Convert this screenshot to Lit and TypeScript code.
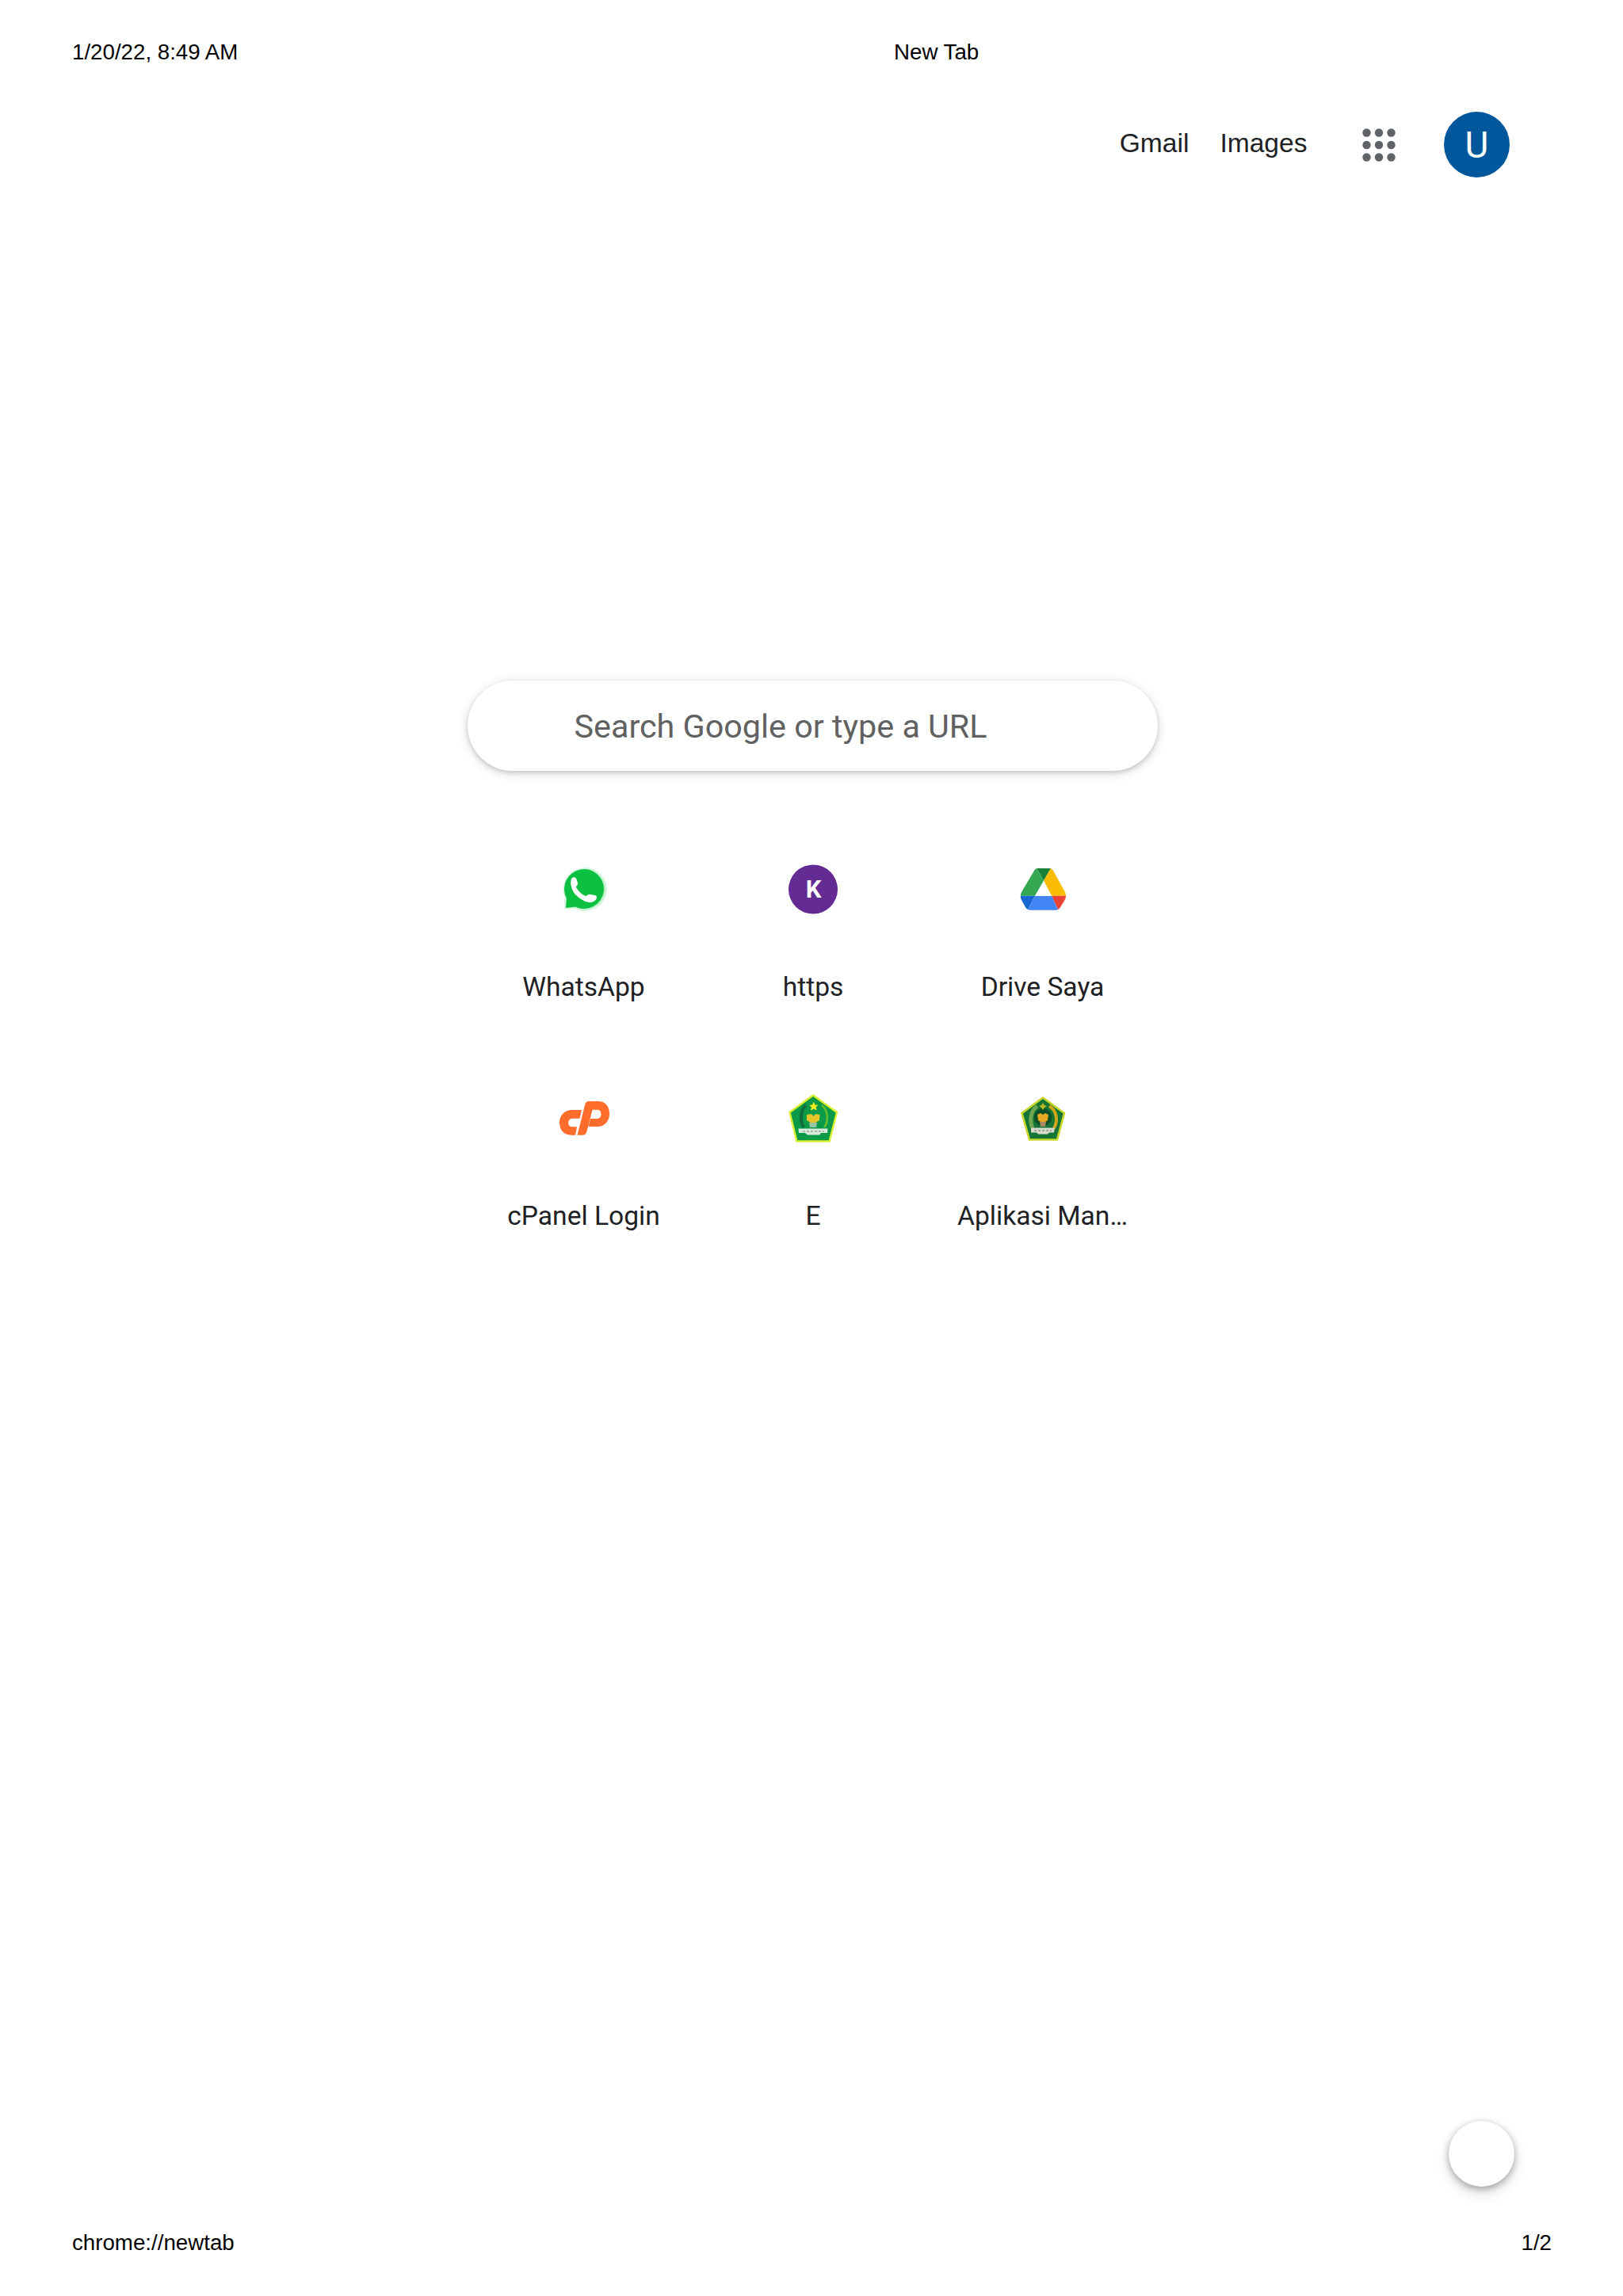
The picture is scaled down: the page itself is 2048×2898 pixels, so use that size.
import { LitElement, html, css, svg } from 'lit';
import { customElement, property } from 'lit/decorators.js';

const whatsapp = svg`
  <path d="M6.500 54.500 L7.500 40 A26.500 26.500 0 1 1 21 54.500 Z" fill="#b5f0c3" stroke="#d5f7dd" stroke-width="2" stroke-linejoin="round"/>
  <path d="M8 54 L9 42 A25 25 0 1 1 20 52.500 Z" fill="#0cc042"/>
  <path d="M15 17 C18 14 21 15 22 19 L23 23 C23 26 21 26 21 28 C24 33 28 37 33 39 C35 39 36 36 39 37 L45 38 C48 39 48 43 43 46 C36 49 27 44 20 37 C15 31 13 23 15 17 Z" fill="#fff"/>
`;

const drive = svg`
  <path d="M23 4 L41 4 L32 19.500 Z" fill="#188038"/>
  <path d="M23 4 L32 19.500 L21 38.700 L2.700 38.700 Q3 36 4 34 L20 7 Q21 5 23 4 Z" fill="#34a853"/>
  <path d="M41 4 Q43 5 44 7 L59 34 Q60 36 60 38.700 L42 38.700 L32 19.500 Z" fill="#fbbc04"/>
  <path d="M2.700 38.700 L21 38.700 L12 56 Q10 55 9 53 L4 44 Q3 42 2.700 38.700 Z" fill="#1967d2"/>
  <path d="M42 38.700 L60 38.700 Q60 42 58 45 L53 53 Q52 55 50 56 Z" fill="#ea4335"/>
  <path d="M21 38.700 L42 38.700 L50 56 Q49 56.700 47 56.700 L15 56.700 Q13 56.700 12 56 Z" fill="#4285f4"/>
  <path d="M32 21 L42 38.700 L21 38.700 Z" fill="#fff"/>
`;

const cpanel = svg`
  <path d="M28 20 L25.500 30.700 L16 30.700 C9.500 31 9.500 41.300 16 41.300 L22 41.300 L20 51.700 L15 51.700 C5 51.700 0 44.500 0 36 C0 27 6 20 16 20 Z" fill="#ff6c2c"/>
  <path fill-rule="evenodd" d="M37 9 L49 9 C58 9 63 16 63 24.500 C63 34 57 41 48 41 L36.500 41 L39 31 L48 31 C54 31 54 19.700 48 19.700 L41.500 19.700 L34.500 47 Q33.500 51.700 29 51.700 L22.500 51.700 L32 14 Q33 9 37 9 Z" fill="#ff6c2c"/>
`;

const emblem = svg`
  <path d="M31 1.500 L61 23 L51.500 59.500 L10.500 59.500 L1.500 23 Z" fill="#0b9b48" stroke="#d9ef2e" stroke-width="2.400"/>
  <path d="M22 14 C15 20 14 34 19 42" fill="none" stroke="#126b3b" stroke-width="4"/>
  <path d="M42 14 C50 20 51 34 45 42" fill="none" stroke="#67bd2c" stroke-width="2.500"/>
  <path d="M31.700 10.500 L33 14 L36.500 14.200 L34 16.500 L35 20 L31.700 18 L28.500 20 L29.500 16.500 L27 14.200 L30.500 14 Z" fill="#f3ec21" stroke="#f3ec21"/>
  <path d="M23 26 L29 25 L31.500 28 L34 25 L39.500 26 L39 33 L34 36 L28 36 L23 33 Z" fill="#e5c52c"/>
  <path d="M26 36 L36 36 L35 42 L27 42 Z" fill="#9bc4a2"/>
  <path d="M12.500 43.500 L49.500 43.500 L49 49 L41 49 L39 51.500 L24 51.500 L21 49 L13 49 Z" fill="#dceadd"/>
  <path d="M18 47 H45" stroke="#86ae90" stroke-width="1.500" stroke-dasharray="3 2"/>
`;

const emblemDark = svg`
  <path d="M31 4.500 L58 24 L49 57.500 L14 57.500 L4.500 24 Z" fill="#147535" stroke="#c9d72b" stroke-width="2.600"/>
  <path d="M24 15 C15 21 14 34 18 43" fill="none" stroke="#70a650" stroke-width="5"/>
  <path d="M39 15 C49 21 50 34 45 43" fill="none" stroke="#d2a51c" stroke-width="4"/>
  <circle cx="31" cy="29" r="11" fill="#0c4f26"/>
  <path d="M31 11 L33 14 L36 15 L33 17 L31 20 L29 17 L26 15 L29 14 Z" fill="#b4b522"/>
  <path d="M24 26 L28 24 L31 26 L34 24 L38 26 L37 33 L34 35 L28 35 L25 33 Z" fill="#e9a822"/>
  <path d="M27 35 L35 35 L34 41 L28 41 Z" fill="#a98a62"/>
  <path d="M16 42.500 L46 42.500 L45 48.500 L39 48.500 L37 50.500 L25 50.500 L23 48.500 L16 48.500 Z" fill="#d6d9cc"/>
  <path d="M20 46 H42" stroke="#8d9d8b" stroke-width="1.500" stroke-dasharray="3 2"/>
`;

const letterK = svg`
  <circle cx="31" cy="30.500" r="31" fill="#642b94"/>
  <text x="31.500" y="41" class="letter" text-anchor="middle">K</text>
`;

@customElement('shortcut-tile')
export class ShortcutTile extends LitElement {
  @property() label = '';
  @property({ attribute: false }) icon: unknown;

  static styles = css`
    :host {
      display: flex;
      flex-direction: column;
      align-items: center;
      box-sizing: border-box;
      height: 289px;
      padding-top: 41px;
    }
    svg {
      width: 62px;
      height: 62px;
      overflow: visible;
    }
    .letter {
      font: 700 31px Roboto, sans-serif;
      fill: #fff;
    }
    .label {
      margin-top: 72px;
      font: 33.600px/40px Roboto, sans-serif;
      color: #202124;
      white-space: nowrap;
    }
  `;

  render() {
    return html`
      <svg viewBox="0 0 62 62">${this.icon}</svg>
      <span class="label">${this.label}</span>
    `;
  }
}

@customElement('app-root')
export class AppRoot extends LitElement {
  static styles = css`
    :host {
      display: flex;
      flex-direction: column;
      box-sizing: border-box;
      width: 2048px;
      height: 2898px;
      background: #fff;
      color: #000;
      font-family: "Liberation Sans", Arial, sans-serif;
    }
    .print-header,
    .print-footer {
      display: flex;
      padding: 0 90px 0 91px;
      font-size: 27.700px;
      line-height: 32px;
    }
    .print-header {
      padding-top: 50px;
    }
    .print-header span {
      width: 1037px;
    }
    .print-header .title {
      width: auto;
    }
    .print-footer {
      justify-content: space-between;
      padding-bottom: 51px;
    }
    .toolbar {
      display: flex;
      align-items: center;
      justify-content: flex-end;
      height: 83px;
      margin-top: 59px;
      padding-right: 143px;
    }
    .toolbar a {
      margin-right: 39px;
      padding-bottom: 3px;
      font-size: 33.600px;
      line-height: 40px;
      color: #202124;
    }
    .apps {
      width: 62px;
      height: 62px;
      margin: 0 51.500px 0 20px;
      fill: #5f6368;
    }
    .avatar {
      display: flex;
      align-items: center;
      justify-content: center;
      width: 83px;
      height: 83px;
      border-radius: 50%;
      background: #01579b;
      color: #fff;
      font: 400 46px Roboto, sans-serif;
    }
    main {
      display: flex;
      flex-direction: column;
      align-items: center;
      margin-top: 635px;
    }
    .search {
      display: flex;
      align-items: center;
      box-sizing: border-box;
      width: 871px;
      height: 114px;
      margin-left: 3px;
      padding: 2px 0 0 134.500px;
      border-radius: 57px;
      background: #fff;
      box-shadow: 0 2.600px 13px rgba(32, 33, 36, 0.18), 0 2.600px 5px rgba(32, 33, 36, 0.14);
      color: #616161;
      font: 41.300px Roboto, sans-serif;
    }
    .shortcuts {
      display: grid;
      grid-template-columns: repeat(3, 289.500px);
      margin: 78px 0 0 4px;
    }
    .fab-row {
      display: flex;
      flex: 1;
      align-items: flex-end;
      justify-content: flex-end;
      padding: 0 137.500px 55px 0;
    }
    .fab {
      width: 83px;
      height: 83px;
      border-radius: 50%;
      background: #fff;
      box-shadow: 0 2.600px 8px rgba(0, 0, 0, 0.3), 0 8px 18px rgba(0, 0, 0, 0.14);
    }
  `;

  private shortcuts = [
    { label: 'WhatsApp', icon: whatsapp },
    { label: 'https', icon: letterK },
    { label: 'Drive Saya', icon: drive },
    { label: 'cPanel Login', icon: cpanel },
    { label: 'E', icon: emblem },
    { label: 'Aplikasi Man…', icon: emblemDark },
  ];

  private dots = [15.5, 31, 46.5];

  render() {
    return html`
      <header class="print-header">
        <span>1/20/22, 8:49 AM</span>
        <span class="title">New Tab</span>
      </header>
      <nav class="toolbar">
        <a>Gmail</a>
        <a>Images</a>
        <svg class="apps" viewBox="0 0 62 62">
          ${this.dots.map((y) => this.dots.map((x) => svg`<circle cx=${x} cy=${y} r="5.200"/>`))}
        </svg>
        <div class="avatar">U</div>
      </nav>
      <main>
        <div class="search">Search Google or type a URL</div>
        <div class="shortcuts">
          ${this.shortcuts.map(
            (s) => html`<shortcut-tile .label=${s.label} .icon=${s.icon}></shortcut-tile>`
          )}
        </div>
      </main>
      <div class="fab-row"><div class="fab"></div></div>
      <footer class="print-footer">
        <span>chrome://newtab</span>
        <span>1/2</span>
      </footer>
    `;
  }
}
